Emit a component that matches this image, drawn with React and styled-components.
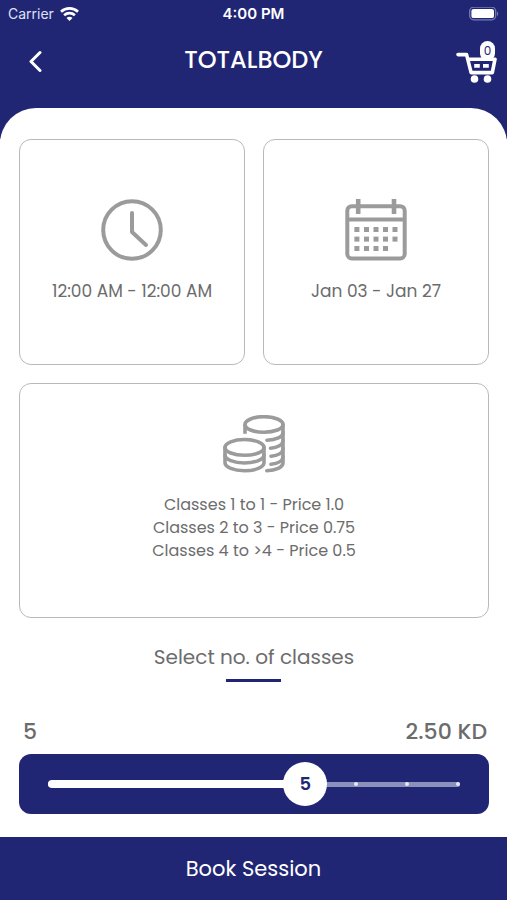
import React, { useState } from "react";
import styled, { createGlobalStyle } from "styled-components";

const NAVY = "#212674";
const GREY = "#6c6c6c";
const ICON = "#9b9b9b";
const MAX_CLASSES = 8;

const GlobalStyle = createGlobalStyle`
  *, *::before, *::after { box-sizing: border-box; }
  body {
    margin: 0;
    background: #fff;
    color: ${GREY};
    font-family: Poppins, Inter, sans-serif;
  }
  button, input, output { font: inherit; }
`;

const Page = styled.div`
  min-height: 100vh;
  display: flex;
  flex-direction: column;
`;

const Top = styled.header`
  background: ${NAVY};
  color: #fff;
`;

const StatusBar = styled.div`
  height: 28px;
  padding: 0 8px;
  display: grid;
  grid-template-columns: 1fr auto 1fr;
  align-items: center;
  font-family: Inter, sans-serif;
  font-size: 15px;
  line-height: 20px;
`;

const Carrier = styled.span`
  display: flex;
  align-items: center;
  gap: 6px;
  color: #dfe1f4;
  font-size: 14px;
`;

const Clock = styled.time`
  font-weight: 600;
`;

const BatteryIcon = styled.svg`
  justify-self: end;
`;

const NavBar = styled.div`
  height: 80px;
  padding: 0 10px 16px;
  display: grid;
  grid-template-columns: 1fr auto 1fr;
  align-items: center;
`;

const IconButton = styled.button`
  display: flex;
  align-items: center;
  justify-content: center;
  justify-self: ${(p) => p.$side};
  width: ${(p) => p.$width};
  height: 46px;
  padding: 0;
  border: 0;
  background: none;
  color: #fff;
  cursor: pointer;
  position: relative;
`;

const CartCount = styled.span`
  position: absolute;
  top: 4px;
  right: 2px;
  width: 15px;
  height: 20px;
  border-radius: 8px;
  background: #fff;
  color: ${NAVY};
  font-size: 12px;
  line-height: 20px;
  text-align: center;
`;

const Title = styled.h1`
  margin: 0;
  font-size: 24px;
  line-height: 32px;
  font-weight: 500;
`;

const SheetEdge = styled.div`
  height: 31px;
  overflow: hidden;

  &::before {
    content: "";
    display: block;
    height: 40px;
    border-radius: 36px 36px 0 0;
    background: #fff;
  }
`;

const Content = styled.main`
  flex: 1;
  display: flex;
  flex-direction: column;
  padding: 0 18px 23px 19px;
`;

const Cards = styled.section`
  display: grid;
  grid-template-columns: 1fr 1fr;
  gap: 18px;
`;

const Card = styled.article`
  grid-column: ${(p) => (p.$wide ? "span 2" : "auto")};
  aspect-ratio: ${(p) => (p.$wide ? "2 / 1" : "1 / 1")};
  padding-bottom: ${(p) => (p.$wide ? "24px" : "0")};
  display: flex;
  flex-direction: column;
  align-items: center;
  justify-content: center;
  gap: ${(p) => (p.$wide ? "20px" : "16px")};
  border: 1px solid #b9b9b9;
  border-radius: 12px;
`;

const CardText = styled.p`
  margin: 0;
  font-size: 17px;
  line-height: 28px;
`;

const PriceList = styled.ul`
  margin: 0;
  padding: 0;
  list-style: none;
  text-align: center;
  font-size: 16px;
  line-height: 23px;
`;

const SelectLabel = styled.label`
  align-self: center;
  margin-top: 23px;
  display: flex;
  flex-direction: column;
  align-items: center;
  gap: 6px;
  font-size: 20px;
  line-height: 32px;

  &::after {
    content: "";
    width: 55px;
    height: 3px;
    background: ${NAVY};
  }
`;

const Summary = styled.div`
  margin-top: auto;
  padding: 0 2px 0 4px;
  display: flex;
  justify-content: space-between;
  font-size: 22px;
  line-height: 32px;
  font-weight: 500;
`;

const SliderPanel = styled.div`
  margin-top: 6px;
  padding: 8px;
  border-radius: 12px;
  background: ${NAVY};
`;

const SliderArea = styled.div`
  position: relative;
  display: grid;
  align-items: center;

  > * { grid-area: 1 / 1; }
`;

const Rail = styled.div`
  height: 5px;
  margin: 0 21px;
  border-radius: 3px;
  background: #8c90bd;
  display: flex;
  align-items: center;
  justify-content: space-between;
`;

const Tick = styled.i`
  width: 4px;
  height: 4px;
  border-radius: 50%;
  background: #e6e8f6;
`;

const FillTrack = styled.div`
  margin: 0 21px;
`;

const Fill = styled.div`
  height: 8px;
  border-radius: 4px;
  background: #fff;
`;

const Range = styled.input`
  appearance: none;
  width: 100%;
  height: 44px;
  margin: 0;
  background: transparent;
  cursor: pointer;
  z-index: 1;

  &::-webkit-slider-thumb {
    appearance: none;
    width: 44px;
    height: 44px;
    border-radius: 50%;
    background: #fff;
  }
`;

const ThumbTravel = styled.div`
  position: relative;
  height: 44px;
  margin: 0 22px;
  z-index: 2;
  pointer-events: none;
`;

const ThumbValue = styled.output`
  position: absolute;
  transform: translateX(-50%);
  color: ${NAVY};
  font-size: 18px;
  line-height: 44px;
  font-weight: 600;
`;

const BookButton = styled.button`
  width: 100%;
  height: 63px;
  padding: 0;
  border: 0;
  background: ${NAVY};
  color: #fff;
  font-size: 21px;
  line-height: 32px;
  cursor: pointer;
`;

const WifiIcon = () => (
  <svg width="19" height="15" viewBox="0 0 19 15" fill="none" stroke="#fff" strokeWidth="2.7" aria-hidden="true">
    <path d="M1 4.8C5.8.3 13.2.3 18 4.8" />
    <path d="M4.1 8.2c3.1-2.8 7.7-2.8 10.8 0" />
    <path d="M6.5 10.9c1.7-1.5 4.3-1.5 6 0L9.5 14Z" fill="#fff" stroke="none" />
  </svg>
);

const Battery = () => (
  <BatteryIcon width="30" height="14" viewBox="0 0 30 14" aria-hidden="true">
    <rect x=".7" y=".2" width="26" height="12.6" rx="4" fill="none" stroke="#777bb0" strokeWidth="1.3" />
    <rect x="2.4" y="1.9" width="22.6" height="9.2" rx="2.2" fill="#fff" />
    <path d="M28 4.5c1.7.7 1.7 3.7 0 4.4Z" fill="#777bb0" />
  </BatteryIcon>
);

const BackIcon = () => (
  <svg width="14" height="24" viewBox="0 0 14 24" fill="none" stroke="#fff" strokeWidth="3" strokeLinecap="round" strokeLinejoin="round" aria-hidden="true">
    <path d="M12 4.5 3 13.5l9 9" />
  </svg>
);

const CartIcon = () => (
  <svg width="41" height="46" viewBox="0 0 41 46" fill="none" stroke="#fff" strokeWidth="3.6" strokeLinecap="round" strokeLinejoin="round" aria-hidden="true">
    <path d="M2 17.6h8.6l4.5 18h21.2l2.7-13.4H12.6" />
    <path d="M18.2 28.9h5.6M27 28.9h5.8" strokeLinecap="butt" strokeWidth="3.6" />
    <circle cx="18.5" cy="42" r="3.8" fill="#fff" stroke="none" />
    <circle cx="31.5" cy="42" r="3.8" fill="#fff" stroke="none" />
  </svg>
);

const ClockIcon = () => (
  <svg width="62" height="62" viewBox="0 0 62 62" fill="none" stroke={ICON} strokeWidth="4" strokeLinecap="round" strokeLinejoin="round" aria-hidden="true">
    <circle cx="31" cy="31" r="28.8" />
    <path d="M31 14v19l14 13" />
  </svg>
);

const CalendarIcon = () => (
  <svg width="62" height="62" viewBox="0 0 62 62" fill="none" stroke={ICON} strokeWidth="4" aria-hidden="true">
    <rect x="2.3" y="7.2" width="57.4" height="52.3" rx="4.5" />
    <path d="M2.3 20.6h57.4" />
    <path d="M13.2 0v15M49 0v15" strokeWidth="4.6" />
    <g fill={ICON} stroke="none">
      {[28, 37.6, 47].map((y, row) =>
        [9.4, 19, 28.5, 38, 47.5].slice(0, row === 2 ? 4 : 5).map((x) => (
          <rect key={`${x}-${y}`} x={x} y={y} width="5" height="5" />
        ))
      )}
    </g>
  </svg>
);

const CoinsIcon = () => (
  <svg width="62" height="58" viewBox="0 0 62 58" fill="none" stroke={ICON} strokeWidth="3.6" strokeLinecap="round" aria-hidden="true">
    <ellipse cx="41" cy="9.5" rx="19" ry="7.8" />
    <path d="M22 9.5v9.3" strokeLinecap="butt" />
    <path d="M60 9.5v38.3c0 4.3-7.2 7.7-16.2 7.9" />
    <path d="M44 25.2c9-.2 16-3.4 16-7.8M47.5 33.2c7.1-.5 12.5-3.5 12.5-7.8M48 41.2c6.9-.6 12-3.5 12-7.8M48 49.2c6.9-.7 12-3.6 12-7.8" />
    <ellipse cx="21.5" cy="32.4" rx="19.5" ry="7.9" />
    <path d="M2 32.4v15.4c0 4.4 8.7 8 19.5 8s19.5-3.6 19.5-8V32.4" />
    <path d="M2 40c0 4.4 8.7 8 19.5 8S41 44.4 41 40" />
  </svg>
);

const PRICES = [
  "Classes 1 to 1 - Price 1.0",
  "Classes 2 to 3 - Price 0.75",
  "Classes 4 to >4 - Price 0.5",
];

const unitPrice = (count) => (count >= 4 ? 0.5 : count >= 2 ? 0.75 : 1);

export default function App() {
  const [count, setCount] = useState(5);
  const percent = `${(count / MAX_CLASSES) * 100}%`;

  return (
    <>
      <GlobalStyle />
      <Page>
        <Top>
          <StatusBar>
            <Carrier>
              Carrier
              <WifiIcon />
            </Carrier>
            <Clock>4:00 PM</Clock>
            <Battery />
          </StatusBar>
          <NavBar>
            <IconButton type="button" aria-label="Back" $side="start" $width="50px">
              <BackIcon />
            </IconButton>
            <Title>TOTALBODY</Title>
            <IconButton type="button" aria-label="Cart" $side="end" $width="41px">
              <CartIcon />
              <CartCount>0</CartCount>
            </IconButton>
          </NavBar>
          <SheetEdge />
        </Top>
        <Content>
          <Cards>
            <Card>
              <ClockIcon />
              <CardText>12:00 AM - 12:00 AM</CardText>
            </Card>
            <Card>
              <CalendarIcon />
              <CardText>Jan 03 - Jan 27</CardText>
            </Card>
            <Card $wide>
              <CoinsIcon />
              <PriceList>
                {PRICES.map((line) => (
                  <li key={line}>{line}</li>
                ))}
              </PriceList>
            </Card>
          </Cards>
          <SelectLabel htmlFor="classes">Select no. of classes</SelectLabel>
          <Summary>
            <span>{count}</span>
            <span>{(count * unitPrice(count)).toFixed(2)} KD</span>
          </Summary>
          <SliderPanel>
            <SliderArea>
              <Rail>
                {Array.from({ length: MAX_CLASSES + 1 }, (_, i) => (
                  <Tick key={i} />
                ))}
              </Rail>
              <FillTrack>
                <Fill style={{ width: percent }} />
              </FillTrack>
              <Range
                id="classes"
                type="range"
                min="0"
                max={MAX_CLASSES}
                value={count}
                onChange={(e) => setCount(Number(e.target.value))}
              />
              <ThumbTravel>
                <ThumbValue htmlFor="classes" style={{ left: percent }}>
                  {count}
                </ThumbValue>
              </ThumbTravel>
            </SliderArea>
          </SliderPanel>
        </Content>
        <BookButton type="button">Book Session</BookButton>
      </Page>
    </>
  );
}
